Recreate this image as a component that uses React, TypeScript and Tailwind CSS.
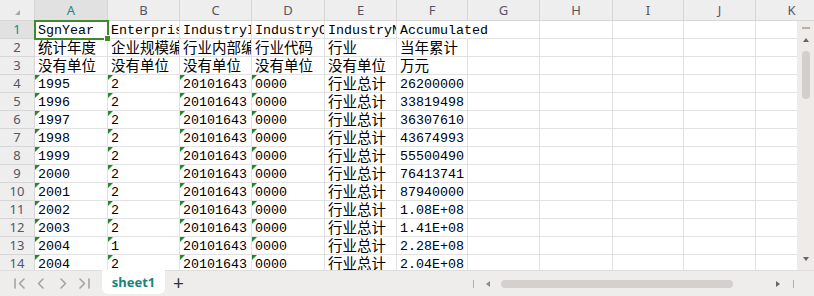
import React from "react";

const W = ["w-[73px]", "w-[72px]", "w-[72px]", "w-[73px]", "w-[72px]", "w-[71px]", "w-[72px]", "w-[73px]", "w-[71px]", "w-[72px]", "w-[72px]"];
const LETTERS = ["A", "B", "C", "D", "E", "F", "G", "H", "I", "J", "K"];

const DATA: string[][] = [
  ["SgnYear", "EnterpriseScale", "IndustryInnerCode", "IndustryCode", "IndustryName", "Accumulated"],
  ["统计年度", "企业规模编码", "行业内部编码", "行业代码", "行业", "当年累计"],
  ["没有单位", "没有单位", "没有单位", "没有单位", "没有单位", "万元"],
  ["1995", "2", "20101643", "0000", "行业总计", "26200000"],
  ["1996", "2", "20101643", "0000", "行业总计", "33819498"],
  ["1997", "2", "20101643", "0000", "行业总计", "36307610"],
  ["1998", "2", "20101643", "0000", "行业总计", "43674993"],
  ["1999", "2", "20101643", "0000", "行业总计", "55500490"],
  ["2000", "2", "20101643", "0000", "行业总计", "76413741"],
  ["2001", "2", "20101643", "0000", "行业总计", "87940000"],
  ["2002", "2", "20101643", "0000", "行业总计", "1.08E+08"],
  ["2003", "2", "20101643", "0000", "行业总计", "1.41E+08"],
  ["2004", "1", "20101643", "0000", "行业总计", "2.28E+08"],
  ["2004", "2", "20101643", "0000", "行业总计", "2.04E+08"],
];

const isCJK = (s: string) => /[\u4e00-\u9fff]/.test(s);

function Cell({ r, c }: { r: number; c: number }) {
  const v = DATA[r]?.[c] ?? "";
  const overflowF1 = r === 0 && c === 5;
  const rightAlign = r >= 3 && c === 5;
  const tri = r >= 3 && c <= 3;
  return (
    <div
      className={
        "shrink-0 h-[18px] border-b border-[#e2e2e2] relative whitespace-nowrap leading-[18px] text-black " +
        W[c] +
        " " +
        (overflowF1 ? "overflow-visible border-r border-r-transparent z-10 " : "overflow-hidden border-r ") +
        (rightAlign ? "text-right pr-[3px] " : "pl-[3px] ") +
        (isCJK(v) ? "text-[14.5px]" : "text-[13.33px]")
      }
    >
      {tri && (
        <span className="absolute top-0 left-0 w-0 h-0 border-t-[5px] border-t-[#1f8a2a] border-r-[5px] border-r-transparent" />
      )}
      <span className="relative top-[1px]">{v}</span>
    </div>
  );
}

export default function App() {
  const rows = Array.from({ length: 14 }, (_, i) => i);
  return (
    <div className="w-[814px] h-[296px] bg-white overflow-hidden relative flex flex-col font-['Liberation_Mono','Noto_Sans_CJK_SC',monospace]">
      {/* Column header */}
      <div className="flex h-[21px] shrink-0 border-b border-[#d6d6d6] bg-[#eeeeee] font-['Noto_Sans','Noto_Sans_CJK_SC',sans-serif] text-[13px]">
        <div className="w-[35px] shrink-0 border-r border-[#d6d6d6] relative">
          <span className="absolute left-[15px] top-[10px] w-0 h-0 border-b-[5px] border-b-[#a8a8a8] border-l-[5px] border-l-transparent" />
        </div>
        {LETTERS.map((l, i) => (
          <div
            key={l}
            className={
              "shrink-0 border-r border-[#d6d6d6] flex items-center justify-center leading-none " +
              W[i] +
              " " +
              (i === 0 ? "bg-[#e1e1e1] text-[#1e8a7f]" : "text-[#555566]")
            }
          >
            {l}
          </div>
        ))}
      </div>

      {/* Body */}
      <div className="flex flex-1 min-h-0">
        <div className="flex-1 overflow-hidden">
          {rows.map((r) => (
            <div key={r} className="flex h-[18px]">
              <div
                className={
                  "w-[35px] shrink-0 h-[18px] border-r border-b border-[#d6d6d6] flex items-center justify-center text-[13px] font-['Noto_Sans',sans-serif] leading-none " +
                  (r === 0 ? "bg-[#e1e1e1] text-[#1e8a7f]" : "bg-[#eeeeee] text-[#555566]")
                }
              >
                {r + 1}
              </div>
              {LETTERS.map((_, c) => (
                <Cell key={c} r={r} c={c} />
              ))}
            </div>
          ))}
        </div>
        {/* Vertical scrollbar */}
        <div className="w-[17px] shrink-0 bg-[#eeebe9] flex flex-col items-center">
          <div className="mt-[6px] w-[8px] h-[2px] bg-[#b4b2b0]" />
          <div className="mt-[9px] w-0 h-0 border-x-[3px] border-x-transparent border-b-[4px] border-b-[#666]" />
          <div className="mt-[9px] w-[8px] h-[48px] rounded-full bg-[#d3cfcc]" />
          <div className="mt-auto mb-[9px] w-0 h-0 border-x-[3px] border-x-transparent border-t-[4px] border-t-[#666]" />
        </div>
      </div>

      {/* Bottom bar */}
      <div className="h-[26px] shrink-0 bg-[#efedeb] border-t border-[#e0dedc] flex items-start">
        <svg width="102" height="25" viewBox="0 0 102 25" className="shrink-0">
          <g stroke="#a3a3a3" strokeWidth="1.6" fill="none" strokeLinecap="round" strokeLinejoin="round">
            <line x1="15" y1="8" x2="15" y2="17" />
            <polyline points="24,8 19.5,12.5 24,17" />
            <polyline points="43,8 38.5,12.5 43,17" />
            <polyline points="61,8 65.5,12.5 61,17" />
            <polyline points="80,8 84.5,12.5 80,17" />
            <line x1="89" y1="8" x2="89" y2="17" />
          </g>
        </svg>
        <div className="w-[63px] h-[24px] -mt-px shrink-0 bg-white rounded-b-[6px] flex items-center justify-center text-[13px] font-bold text-[#17847d] font-['Noto_Sans',sans-serif] leading-none">
          sheet1
        </div>
        <div className="ml-[8px] h-[24px] flex items-center text-[19px] leading-none text-[#333] font-['Noto_Sans',sans-serif]">
          +
        </div>
        <div className="ml-auto w-[348px] h-[25px] flex items-center shrink-0">
          <div className="ml-[7px] w-px h-[8px] bg-[#b0aeac]" />
          <div className="ml-[12px] w-0 h-0 border-y-[3px] border-y-transparent border-r-[4px] border-r-[#8a8a8a]" />
          <div className="ml-[11px] w-[232px] h-[8px] rounded-full bg-[#d3d0cd]" />
          <div className="ml-[43px] w-0 h-0 border-y-[3px] border-y-transparent border-l-[4px] border-l-[#666]" />
          <div className="ml-[13px] w-px h-[8px] bg-[#b0aeac]" />
        </div>
      </div>

      {/* Selection on A1 */}
      <div className="absolute left-[34px] top-[20px] w-[75px] h-[20px] border-2 border-[#3f8a2c] pointer-events-none" />
      <div className="absolute left-[105px] top-[36px] w-[5px] h-[5px] bg-[#3f8a2c] border border-white box-content -ml-px -mt-px pointer-events-none" />
    </div>
  );
}
